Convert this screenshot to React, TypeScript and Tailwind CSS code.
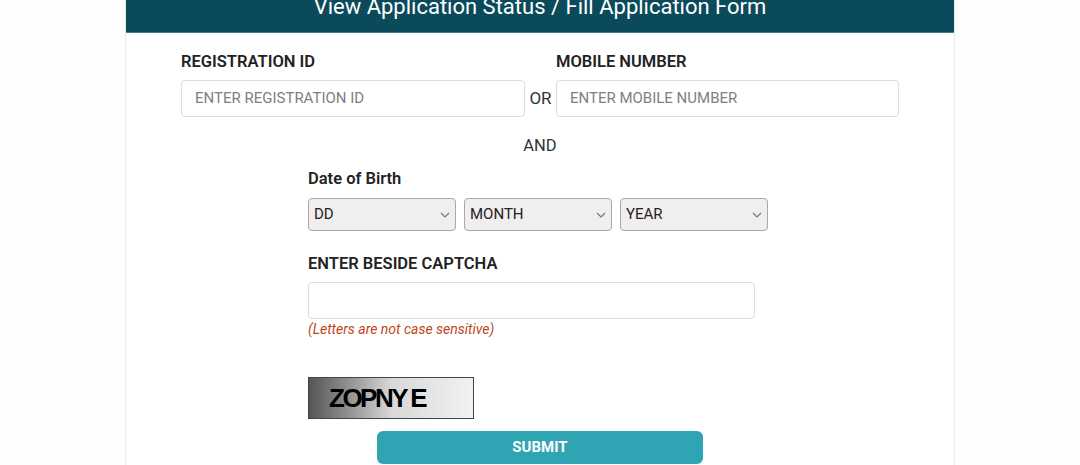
import React from "react";

function Chevron() {
  return (
    <svg viewBox="0 0 10 6" className="h-[6px] w-[10px]" fill="none" stroke="#777" strokeWidth="1.2">
      <path d="M1 1l4 4 4-4" />
    </svg>
  );
}

function DobSelect({ label }: { label: string }) {
  return (
    <div className="flex h-[33px] w-[148px] items-center justify-between rounded-[4px] border border-[#a9a9a9] bg-[#f0eeee] pl-[5px] pr-[5px] text-[15px] text-[#222]">
      <span>{label}</span>
      <Chevron />
    </div>
  );
}

export default function App() {
  return (
    <div className="min-h-[465px] w-[1080px] bg-[#fdfdfd] font-['Roboto',sans-serif]">
      <div className="mx-auto h-[465px] w-[830px] overflow-hidden border-x border-[#ececec] bg-white">
        {/* header bar */}
        <div className="h-[33px] overflow-hidden border-b border-[#3d7f8c] bg-[#0b4a5a] text-center">
          <div className="mt-[-6px] text-[22px] leading-[26px] text-white">View Application Status / Fill Application Form</div>
        </div>

        {/* id / mobile */}
        <div className="mt-[19px] flex items-end pl-[55px]">
          <div className="flex flex-col">
            <label className="text-[16.5px] font-semibold leading-[20px] text-[#222]">REGISTRATION ID</label>
            <div className="mt-[8px] flex h-[37px] w-[344px] items-center rounded-[4px] border border-[#dcdcdc] px-[13px] text-[15px] text-[#808080]">
              ENTER REGISTRATION ID
            </div>
          </div>
          <div className="flex h-[37px] w-[31px] items-center justify-center text-[17px] text-[#333]">OR</div>
          <div className="flex flex-col">
            <label className="text-[16.5px] font-semibold leading-[20px] text-[#222]">MOBILE NUMBER</label>
            <div className="mt-[8px] flex h-[37px] w-[343px] items-center rounded-[4px] border border-[#dcdcdc] px-[13px] text-[15px] text-[#808080]">
              ENTER MOBILE NUMBER
            </div>
          </div>
        </div>

        <div className="mt-[18px] text-center text-[16.5px] leading-[22px] text-[#333]">AND</div>

        <div className="ml-[182px] mt-[12px] flex flex-col">
          <label className="text-[16.5px] font-semibold leading-[20px] text-[#222]">Date of Birth</label>
          <div className="mt-[9px] flex gap-[8px]">
            <DobSelect label="DD" />
            <DobSelect label="MONTH" />
            <DobSelect label="YEAR" />
          </div>

          <label className="mt-[23px] text-[16.5px] font-semibold leading-[20px] text-[#222]">ENTER BESIDE CAPTCHA</label>
          <div className="mt-[8px] h-[37px] w-[447px] rounded-[4px] border border-[#dcdcdc]" />
          <p className="mt-[1px] text-[14px] italic leading-[18px] text-[#c0461c]">(Letters are not case sensitive)</p>

          <div className="mt-[39px] flex h-[42px] w-[166px] items-center border border-[#444] bg-gradient-to-r from-[#555] via-[#d8d8d8] to-[#f2f2f2] pl-[20px]">
            <span className="font-['Liberation_Sans',sans-serif] text-[26px] font-bold tracking-[-2.5px] text-black">ZOPNY E</span>
          </div>
        </div>

        <div className="mt-[12px] flex justify-center">
          <button className="h-[33px] w-[326px] rounded-[6px] bg-[#2fa5b4] text-[15px] font-bold text-white">SUBMIT</button>
        </div>
      </div>
    </div>
  );
}
